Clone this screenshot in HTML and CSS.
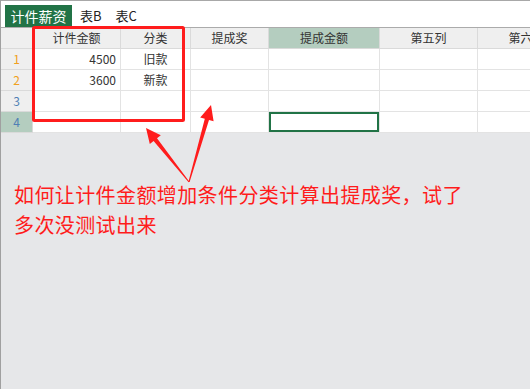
FILE: index.html
```html
<!DOCTYPE html>
<html lang="zh-CN">
<head>
    <meta charset="UTF-8">
    <meta name="viewport" content="width=device-width, initial-scale=1.0">
    <title>计件薪资</title>
    <link rel="stylesheet" href="styles.css">
</head>
<body>

<div class="pagina">
    <!-- pestañas de hojas -->
    <div class="tabs">
        <div class="tab activa">计件薪资</div>
        <div class="tab">表B</div>
        <div class="tab">表C</div>
    </div>

    <!-- hoja -->
    <div class="hoja">
        <div class="celda esquina"></div>
        <div class="celda cab">计件金额</div>
        <div class="celda cab">分类</div>
        <div class="celda cab">提成奖</div>
        <div class="celda cab marcada">提成金额</div>
        <div class="celda cab">第五列</div>
        <div class="celda cab">第六列</div>

        <div class="celda fila naranja">1</div>
        <div class="celda num">4500</div>
        <div class="celda centro">旧款</div>
        <div class="celda"></div>
        <div class="celda"></div>
        <div class="celda"></div>
        <div class="celda"></div>

        <div class="celda fila naranja">2</div>
        <div class="celda num">3600</div>
        <div class="celda centro">新款</div>
        <div class="celda"></div>
        <div class="celda"></div>
        <div class="celda"></div>
        <div class="celda"></div>

        <div class="celda fila azul">3</div>
        <div class="celda"></div>
        <div class="celda"></div>
        <div class="celda"></div>
        <div class="celda"></div>
        <div class="celda"></div>
        <div class="celda"></div>

        <div class="celda fila azul marcada">4</div>
        <div class="celda"></div>
        <div class="celda"></div>
        <div class="celda"></div>
        <div class="celda seleccion"></div>
        <div class="celda"></div>
        <div class="celda"></div>
    </div>

    <div class="fondo">
        <p class="nota">如何让计件金额增加条件分类计算出提成奖，试了<br>多次没测试出来</p>
    </div>

    <!-- anotaciones en rojo -->
    <svg class="marcas" width="530" height="389" viewBox="0 0 530 389">
        <rect x="33.5" y="27.5" width="150" height="93" rx="1" fill="none" stroke="#ff1c1c" stroke-width="3"/>
        <polygon fill="#ff1c1c" points="189.4,181.7 157,138.3 160.8,135.3 146,128 149.8,144.1 153.6,141.1 188.6,182.3"/>
        <polygon fill="#ff1c1c" points="189.6,182.1 209,120 213.6,121.3 211,105 200.2,117.5 204.8,118.8 188.4,181.9"/>
    </svg>
</div>

</body>
</html>
```

FILE: styles.css
```css
body {
    margin: 0;
    padding: 0;
    font-family: "Noto Sans CJK SC", "Liberation Sans", sans-serif;
    color: #333;
    background: #e6e7e9;
}
.pagina {
    position: relative;
    width: 530px;
    height: 389px;
    overflow: hidden;
    border-left: 1px solid #a0a0a0;
    box-sizing: border-box;
    display: flex;
    flex-direction: column;
}
.tabs {
    height: 27px;
    box-sizing: border-box;
    border-top: 1px solid #a8a8a8;
    background: #ffffff;
    display: flex;
    align-items: flex-start;
    padding: 4px 0 0 4px;
    gap: 2px;
}
.tab {
    height: 22px;
    line-height: 22px;
    font-size: 13px;
    padding: 0 6px;
    color: #222;
}
.tab.activa {
    width: 67px;
    box-sizing: border-box;
    padding: 0;
    text-align: center;
    background: #217346;
    color: #ffffff;
    font-size: 14px;
}
.hoja {
    display: grid;
    grid-template-columns: 32px 88px 70px 78px 111px 98px 98px;
    grid-auto-rows: 21px;
    border-top: 1px solid #ababab;
    background: #ffffff;
    overflow: hidden;
}
.celda {
    box-sizing: border-box;
    border-right: 1px solid #e3e3e3;
    border-bottom: 1px solid #e3e3e3;
    font-size: 12px;
    line-height: 20px;
    white-space: nowrap;
    overflow: hidden;
}
.cab, .esquina {
    background: #efefef;
    text-align: center;
    border-color: #dadada;
}
.fila {
    background: #efefef;
    text-align: center;
    border-color: #dadada;
}
.naranja {
    color: #f0a020;
}
.azul {
    color: #4f7fb5;
}
.marcada {
    background: #b4cdbf;
}
.num {
    text-align: right;
    padding-right: 4px;
}
.centro {
    text-align: center;
}
.seleccion {
    box-shadow: inset 0 0 0 2px #217346;
}
.fondo {
    flex: 1;
    background: #e6e7e9;
    padding: 47px 0 0 13px;
}
.nota {
    margin: 0;
    color: #ff1c1c;
    font-size: 20px;
    letter-spacing: 0.4px;
    line-height: 30px;
}
.marcas {
    position: absolute;
    left: -1px;
    top: 0;
    pointer-events: none;
}
```
